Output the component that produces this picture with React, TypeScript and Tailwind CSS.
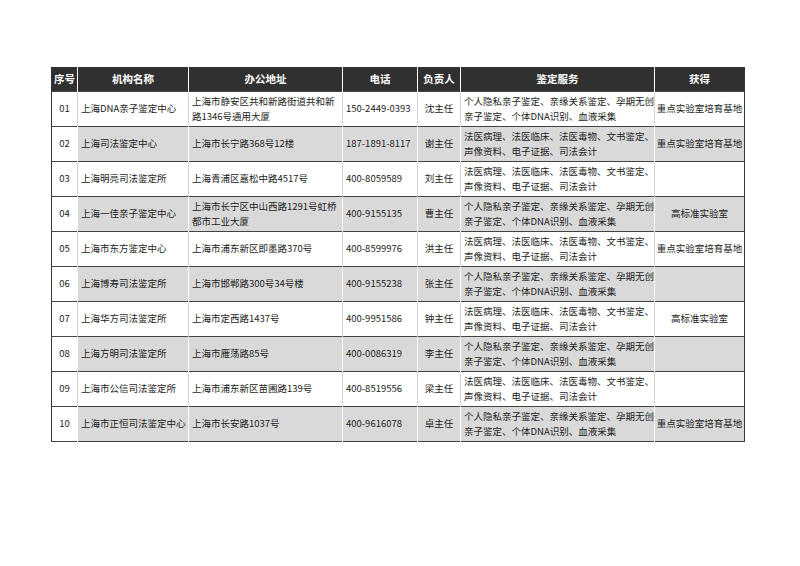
const SVC_A = ["个人隐私亲子鉴定、亲缘关系鉴定、孕期无创", "亲子鉴定、个体DNA识别、血液采集"]
const SVC_B = ["法医病理、法医临床、法医毒物、文书鉴定、", "声像资料、电子证据、司法会计"]

type Row = {
  no: string
  name: string
  addr: string[]
  phone: string
  head: string
  svc: string[]
  award: string
}

const ROWS: Row[] = [
  { no: "01", name: "上海DNA亲子鉴定中心", addr: ["上海市静安区共和新路街道共和新", "路1346号通用大厦"], phone: "150-2449-0393", head: "沈主任", svc: SVC_A, award: "重点实验室培育基地" },
  { no: "02", name: "上海司法鉴定中心", addr: ["上海市长宁路368号12楼"], phone: "187-1891-8117", head: "谢主任", svc: SVC_B, award: "重点实验室培育基地" },
  { no: "03", name: "上海明亮司法鉴定所", addr: ["上海青浦区嘉松中路4517号"], phone: "400-8059589", head: "刘主任", svc: SVC_B, award: "" },
  { no: "04", name: "上海一佳亲子鉴定中心", addr: ["上海市长宁区中山西路1291号虹桥", "都市工业大厦"], phone: "400-9155135", head: "曹主任", svc: SVC_A, award: "高标准实验室" },
  { no: "05", name: "上海市东方鉴定中心", addr: ["上海市浦东新区即墨路370号"], phone: "400-8599976", head: "洪主任", svc: SVC_B, award: "重点实验室培育基地" },
  { no: "06", name: "上海博寿司法鉴定所", addr: ["上海市邯郸路300号34号楼"], phone: "400-9155238", head: "张主任", svc: SVC_A, award: "" },
  { no: "07", name: "上海华方司法鉴定所", addr: ["上海市定西路1437号"], phone: "400-9951586", head: "钟主任", svc: SVC_B, award: "高标准实验室" },
  { no: "08", name: "上海方明司法鉴定所", addr: ["上海市雁荡路85号"], phone: "400-0086319", head: "李主任", svc: SVC_A, award: "" },
  { no: "09", name: "上海市公信司法鉴定所", addr: ["上海市浦东新区苗圃路139号"], phone: "400-8519556", head: "梁主任", svc: SVC_B, award: "" },
  { no: "10", name: "上海市正恒司法鉴定中心", addr: ["上海市长安路1037号"], phone: "400-9616078", head: "卓主任", svc: SVC_A, award: "重点实验室培育基地" },
]

const HEADERS = ["序号", "机构名称", "办公地址", "电话", "负责人", "鉴定服务", "获得"]
const WIDTHS = [26, 111, 154, 75, 43, 194, 90]

function Lines({ lines }: { lines: string[] }) {
  return <>{lines.map((l, i) => <div key={i} className="whitespace-nowrap">{l}</div>)}</>
}

export default function App() {
  return (
    <div className="min-h-[566px] w-[800px] bg-white pl-[51px] pt-[67px]" style={{ fontFamily: '"Noto Sans CJK SC", "Noto Sans", sans-serif' }}>
      <table className="table-fixed border-collapse w-[693px] border-x border-[#333]">
        <colgroup>
          {WIDTHS.map((w, i) => <col key={i} style={{ width: w }} />)}
        </colgroup>
        <thead>
          <tr className="h-[24px] bg-[#303030]">
            {HEADERS.map((h, i) => (
              <th key={h} className={`text-[10.5px] font-bold text-white text-center p-0 ${i > 0 ? "border-l border-white" : ""}`}>{h}</th>
            ))}
          </tr>
        </thead>
        <tbody className="text-[9.5px] leading-[15px] text-[#222]">
          {ROWS.map((r, idx) => {
            const gray = idx % 2 === 1
            const bg = gray ? "bg-[#d9d9d9]" : "bg-white"
            const vline = gray ? "border-l border-white" : "border-l border-[#d4d4d4]"
            return (
              <tr key={r.no} className="h-[35px] border-t border-[#444] last:border-b">
                <td className="text-center align-middle bg-white p-0">{r.no}</td>
                <td className={`${bg} ${vline} pl-[3px] align-middle whitespace-nowrap`}>{r.name}</td>
                <td className={`${bg} ${vline} pl-[3px] align-middle`}><Lines lines={r.addr} /></td>
                <td className={`${bg} ${vline} pl-[3px] align-middle whitespace-nowrap`}>{r.phone}</td>
                <td className={`${bg} ${vline} text-center align-middle p-0`}>{r.head}</td>
                <td className={`${bg} ${vline} pl-[3px] align-middle`}><Lines lines={r.svc} /></td>
                <td className={`${bg} ${vline} text-center align-middle p-0 whitespace-nowrap`}>{r.award}</td>
              </tr>
            )
          })}
        </tbody>
      </table>
    </div>
  )
}
